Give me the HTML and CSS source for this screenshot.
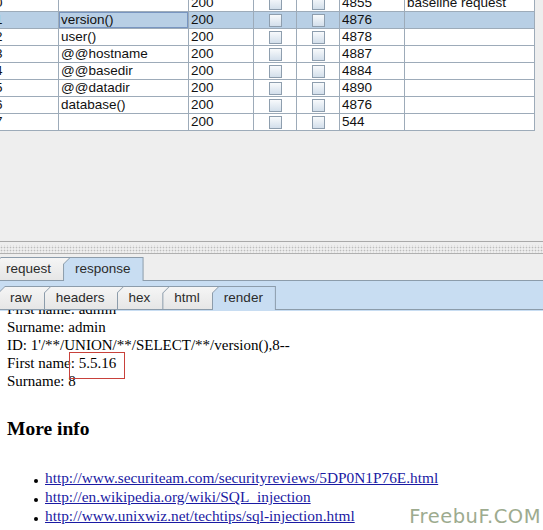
FILE: index.html
```html
<!DOCTYPE html>
<html>
<head>
<meta charset="utf-8">
<title>Intruder results</title>
<link rel="stylesheet" href="styles.css">
</head>
<body>
<div class="app">
  <section class="results">
    <div class="grid">
      <div class="row"><div>0</div><div></div><div>200</div><div class="cb-cell"><span class="cb"></span></div><div class="cb-cell"><span class="cb"></span></div><div>4855</div><div>baseline request</div></div>
      <div class="row sel"><div>1</div><div class="focus">version()</div><div>200</div><div class="cb-cell"><span class="cb"></span></div><div class="cb-cell"><span class="cb"></span></div><div>4876</div><div></div></div>
      <div class="row"><div>2</div><div>user()</div><div>200</div><div class="cb-cell"><span class="cb"></span></div><div class="cb-cell"><span class="cb"></span></div><div>4878</div><div></div></div>
      <div class="row"><div>3</div><div>@@hostname</div><div>200</div><div class="cb-cell"><span class="cb"></span></div><div class="cb-cell"><span class="cb"></span></div><div>4887</div><div></div></div>
      <div class="row"><div>4</div><div>@@basedir</div><div>200</div><div class="cb-cell"><span class="cb"></span></div><div class="cb-cell"><span class="cb"></span></div><div>4884</div><div></div></div>
      <div class="row"><div>5</div><div>@@datadir</div><div>200</div><div class="cb-cell"><span class="cb"></span></div><div class="cb-cell"><span class="cb"></span></div><div>4890</div><div></div></div>
      <div class="row"><div>6</div><div>database()</div><div>200</div><div class="cb-cell"><span class="cb"></span></div><div class="cb-cell"><span class="cb"></span></div><div>4876</div><div></div></div>
      <div class="row"><div>7</div><div></div><div>200</div><div class="cb-cell"><span class="cb"></span></div><div class="cb-cell"><span class="cb"></span></div><div>544</div><div></div></div>
    </div>
  </section>

  <div class="splitter"><div class="grip"></div></div>

  <div class="tabs tabs-main">
    <div class="tab"><span>request</span></div>
    <div class="tab sel last"><span>response</span></div>
  </div>

  <div class="panel">
    <div class="tabs tabs-sub">
      <div class="tab"><span>raw</span></div>
      <div class="tab"><span>headers</span></div>
      <div class="tab"><span>hex</span></div>
      <div class="tab"><span>html</span></div>
      <div class="tab sel last"><span>render</span></div>
    </div>
  </div>

  <div class="view">
    <div class="doc">
      <p>First name: admin<br>Surname: admin<br>ID: 1'/**/UNION/**/SELECT/**/version(),8--<br>First name: 5.5.16<br>Surname: 8</p>
      <h3>More info</h3>
      <ul>
        <li><a href="#">http://www.securiteam.com/securityreviews/5DP0N1P76E.html</a></li>
        <li><a href="#">http://en.wikipedia.org/wiki/SQL_injection</a></li>
        <li><a href="#">http://www.unixwiz.net/techtips/sql-injection.html</a></li>
      </ul>
    </div>
    <div class="mark"></div>
  </div>

  <div class="watermark">FreebuF.COM</div>
</div>
</body>
</html>
```

FILE: styles.css
```css
* { box-sizing: border-box; }
html, body { margin: 0; padding: 0; }
body {
  width: 543px;
  height: 530px;
  overflow: hidden;
  background: #eeeeee;
  font-family: "Liberation Sans", Arial, sans-serif;
  font-size: 13.5px;
  color: #111;
}
.app {
  position: relative;
  width: 543px;
  height: 530px;
  overflow: hidden;
  display: flex;
  flex-direction: column;
}

/* results table */
.results {
  flex: none;
  height: 241px;
  background: #eeeeee;
  overflow: hidden;
}
.grid {
  margin: -5px 0 0 -7px;
  width: 542px;
}
.row {
  display: grid;
  grid-template-columns: 66px 130px 65px 43px 43px 65px 130px;
  height: 17px;
  background: #ffffff;
}
.row > div {
  display: flex;
  align-items: center;
  padding-left: 2px;
  border-right: 1px solid #9dabb9;
  border-bottom: 1px solid #9dabb9;
  line-height: 16px;
  white-space: nowrap;
  overflow: hidden;
}
.row.sel { background: #b8cfe5; }
.row .focus { box-shadow: inset 0 0 0 1px #7895c0; }
.row > .cb-cell { justify-content: center; padding-left: 0; }
.cb {
  width: 13px;
  height: 13px;
  border: 1px solid #8e9eae;
  background: linear-gradient(#f8fafc, #d3dfeb);
}

/* split pane divider */
.splitter {
  flex: none;
  height: 14px;
  border-top: 1px solid #a9a9a9;
  padding: 3px 0 1px;
}
.grip {
  height: 9px;
  border-bottom: 1px solid #b0b0b0;
  background: radial-gradient(circle, #bcbcbc 0.7px, transparent 1.1px) 0 1px / 3px 3px;
}

/* tabs */
.tabs {
  display: flex;
  align-items: flex-end;
  height: 23px;
  flex: none;
}
.tabs-main { margin: 2px 0 0 -6px; }
.tabs-sub { margin-left: -2px; }
.tab {
  position: relative;
  height: 23px;
  padding: 1px 0 0 1px;
  margin-right: -7px;
  background: #8c9cab;
  clip-path: polygon(0 100%, 0 7px, 7px 0, 100% 0, 100% 100%);
  color: #2b2b2b;
}
.tab span {
  display: flex;
  align-items: center;
  height: 100%;
  padding: 0 19px 1px 11px;
  background: linear-gradient(#f5f5f5, #e6e6e6);
  clip-path: polygon(0 100%, 0 6px, 6px 0, 100% 0, 100% 100%);
}
.tab.last { margin-right: 0; padding-right: 1px; }
.tab.last span { padding-right: 12px; }
.tab.sel {
  z-index: 2;
  height: 24px;
  margin-bottom: -1px;
}
.tab.sel span { background: #c8ddf2; padding-bottom: 2px; }

.panel {
  flex: none;
  background: #c8ddf2;
  border-top: 1px solid #8c9cab;
  padding-top: 5px;
}

/* rendered response */
.view {
  position: relative;
  flex: 1;
  background: #ffffff;
  border-top: 1px solid #8c9cab;
  box-shadow: inset 0 1px #c8ddf2;
  overflow: hidden;
}
.doc {
  margin-top: -11px;
  padding-left: 7px;
  font-family: "Liberation Serif", "Times New Roman", serif;
  font-size: 15px;
  line-height: 18px;
  color: #000;
}
.doc p { margin: 0 0 0; padding-top: 1px; }
.doc h3 {
  margin: 27px 0 0;
  font-size: 19.5px;
  line-height: 23px;
  font-weight: bold;
}
.doc ul {
  margin: 28px 0 0;
  padding: 0;
  list-style: none;
  font-size: 15.35px;
  line-height: 19px;
}
.doc li { padding-left: 38px; white-space: nowrap; }
.doc li::before {
  content: "";
  display: inline-block;
  width: 4px;
  height: 4px;
  margin: 0 7px 0 -11px;
  border-radius: 50%;
  background: #000;
}
.doc a { color: #1a1aa3; text-decoration: underline; }

.mark {
  position: absolute;
  left: 69px;
  top: 42px;
  width: 56px;
  height: 27px;
  border: 1px solid #c8413b;
}

.watermark {
  position: absolute;
  top: 507px;
  right: 2px;
  font-family: "DejaVu Sans", Verdana, sans-serif;
  font-size: 19.5px;
  line-height: 19px;
  letter-spacing: 0.5px;
  color: #9dab8f;
}
```
